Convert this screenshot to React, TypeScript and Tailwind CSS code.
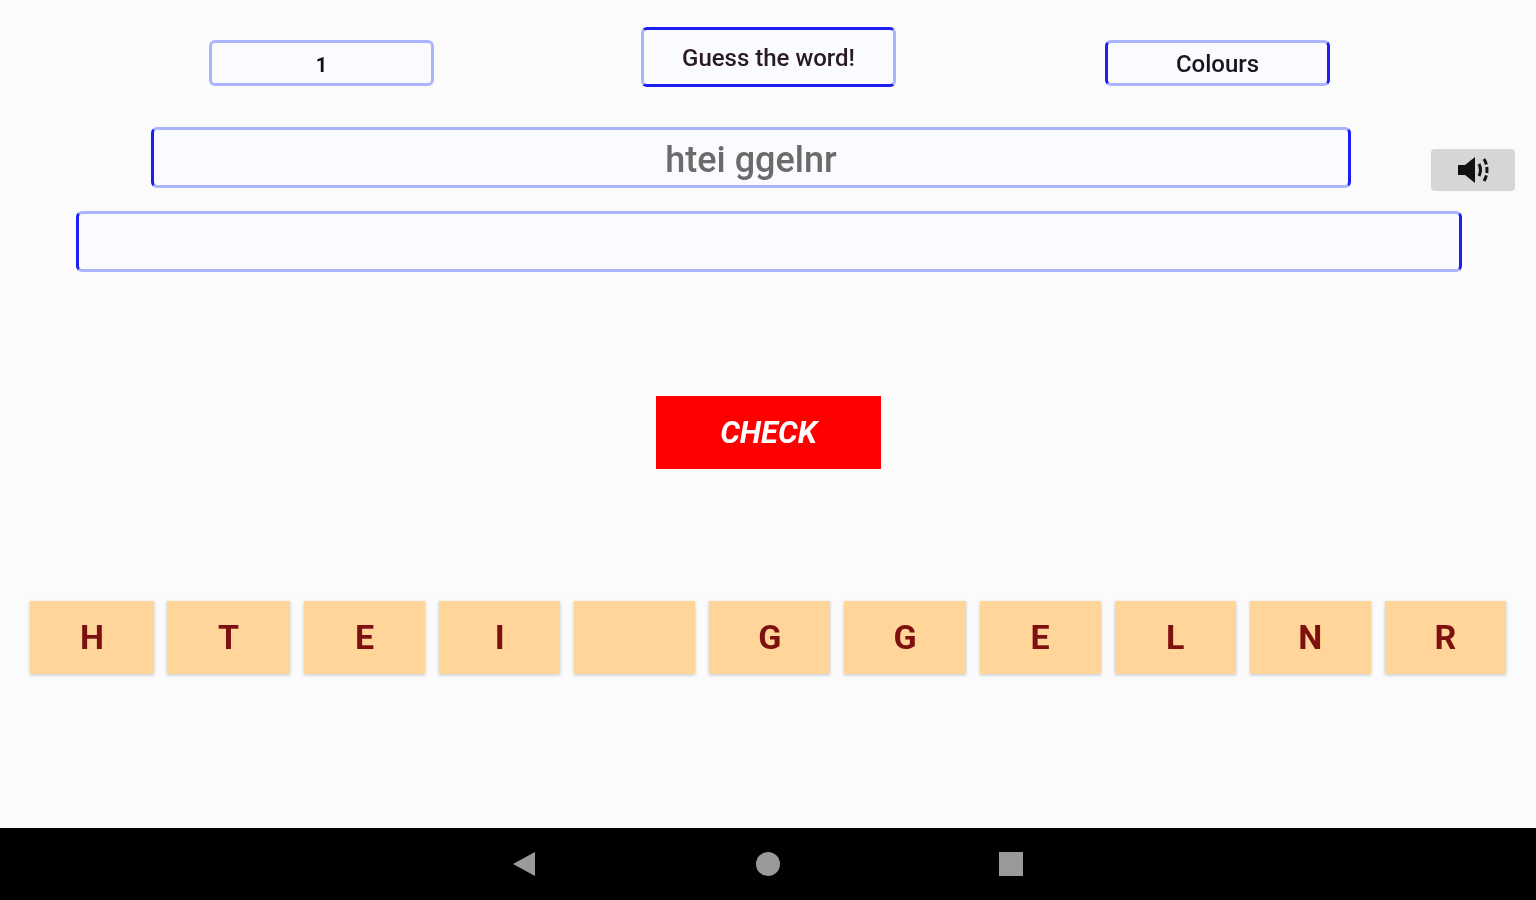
const letters = ["H", "T", "E", "I", " ", "G", "G", "E", "L", "N", "R"];

function SpeakerIcon() {
  return (
    <svg width="34" height="28" viewBox="0 0 34 28" fill="none">
      <path d="M2 9h7l10-8v26l-10-8H2z" fill="#111" />
      <path d="M23 8c2 4 2 8 0 12" stroke="#111" strokeWidth="3" />
      <path d="M28 3c4 6 4 16 0 22" stroke="#111" strokeWidth="3" strokeDasharray="6 2.500" />
    </svg>
  );
}

export default function App() {
  return (
    <div className="flex h-[900px] w-[1536px] flex-col overflow-hidden bg-[#fbfbfb] font-['Roboto',sans-serif] blur-[0.5px]">
      <main className="flex-1">
        {/* Top row */}
        <div className="flex items-end pl-[209px] pt-[27px]">
          <div className="mb-px flex h-[46px] w-[225px] items-center justify-center rounded-md border-[3px] border-[#aab4ff] bg-[#f9fbff] pt-[3px] text-[20px] font-bold text-[#111]">
            1
          </div>
          <div className="ml-[207px] flex h-[60px] w-[255px] items-center justify-center rounded-md border-[3px] border-x-[#aab4ff] border-y-[#1c1ff0] bg-[#f9fbff] pt-[2px] text-[24px] font-medium text-[#2a1a22]">
            Guess the word!
          </div>
          <div className="mb-px ml-[209px] flex h-[46px] w-[225px] items-center justify-center rounded-md border-[3px] border-x-[#1c1ff0] border-y-[#aab4ff] bg-[#f9fbff] pt-[2px] text-[24px] font-medium text-[#1a1420]">
            Colours
          </div>
        </div>

        {/* Scrambled word */}
        <div className="mt-[40px] flex items-start pl-[151px]">
          <div className="flex h-[61px] w-[1200px] items-center justify-center rounded-md border-[3px] border-x-[#1c1ff0] border-y-[#aab4ff] bg-[#f9fbff] pt-[4px] text-[36px] font-medium text-[#6b6b6b]">
            htei ggelnr
          </div>
          <button className="ml-[80px] mt-[22px] flex h-[42px] w-[84px] items-center justify-center rounded-sm bg-[#d6d6d6]">
            <SpeakerIcon />
          </button>
        </div>

        {/* Answer */}
        <div className="ml-[76px] mt-[20px] h-[61px] w-[1386px] rounded-md border-[3px] border-x-[#1c1ff0] border-y-[#aab4ff] bg-[#f9fbff]" />

        <button className="ml-[656px] mt-[124px] flex h-[73px] w-[225px] items-center justify-center bg-[#fe0000] pt-[2px] text-[31px] font-bold italic text-white">
          CHECK
        </button>

        {/* Letter tiles */}
        <div className="mt-[132px] flex gap-[14px] px-[30px]">
          {letters.map((l, i) => (
            <div
              key={i}
              className={`flex h-[73px] items-center justify-center whitespace-pre bg-[#ffd599] text-[34px] font-bold text-[#7f1010] shadow-[0_1px_3px_rgba(120,130,150,0.45)] ${
                i === 0 ? "w-[124px]" : i === 1 ? "-ml-px w-[123px]" : "flex-1"
              }`}
            >
              {l}
            </div>
          ))}
        </div>
      </main>

      {/* Android nav bar */}
      <nav className="flex h-[72px] items-center bg-black pl-[512px]">
        <svg width="24" height="26" viewBox="0 0 24 26"><path d="M1 13L23 1v24z" fill="#9a9a9a" /></svg>
        <div className="ml-[220px] h-[24px] w-[24px] rounded-full bg-[#9a9a9a]" />
        <div className="ml-[219px] h-[24px] w-[24px] bg-[#9a9a9a]" />
      </nav>
    </div>
  );
}
